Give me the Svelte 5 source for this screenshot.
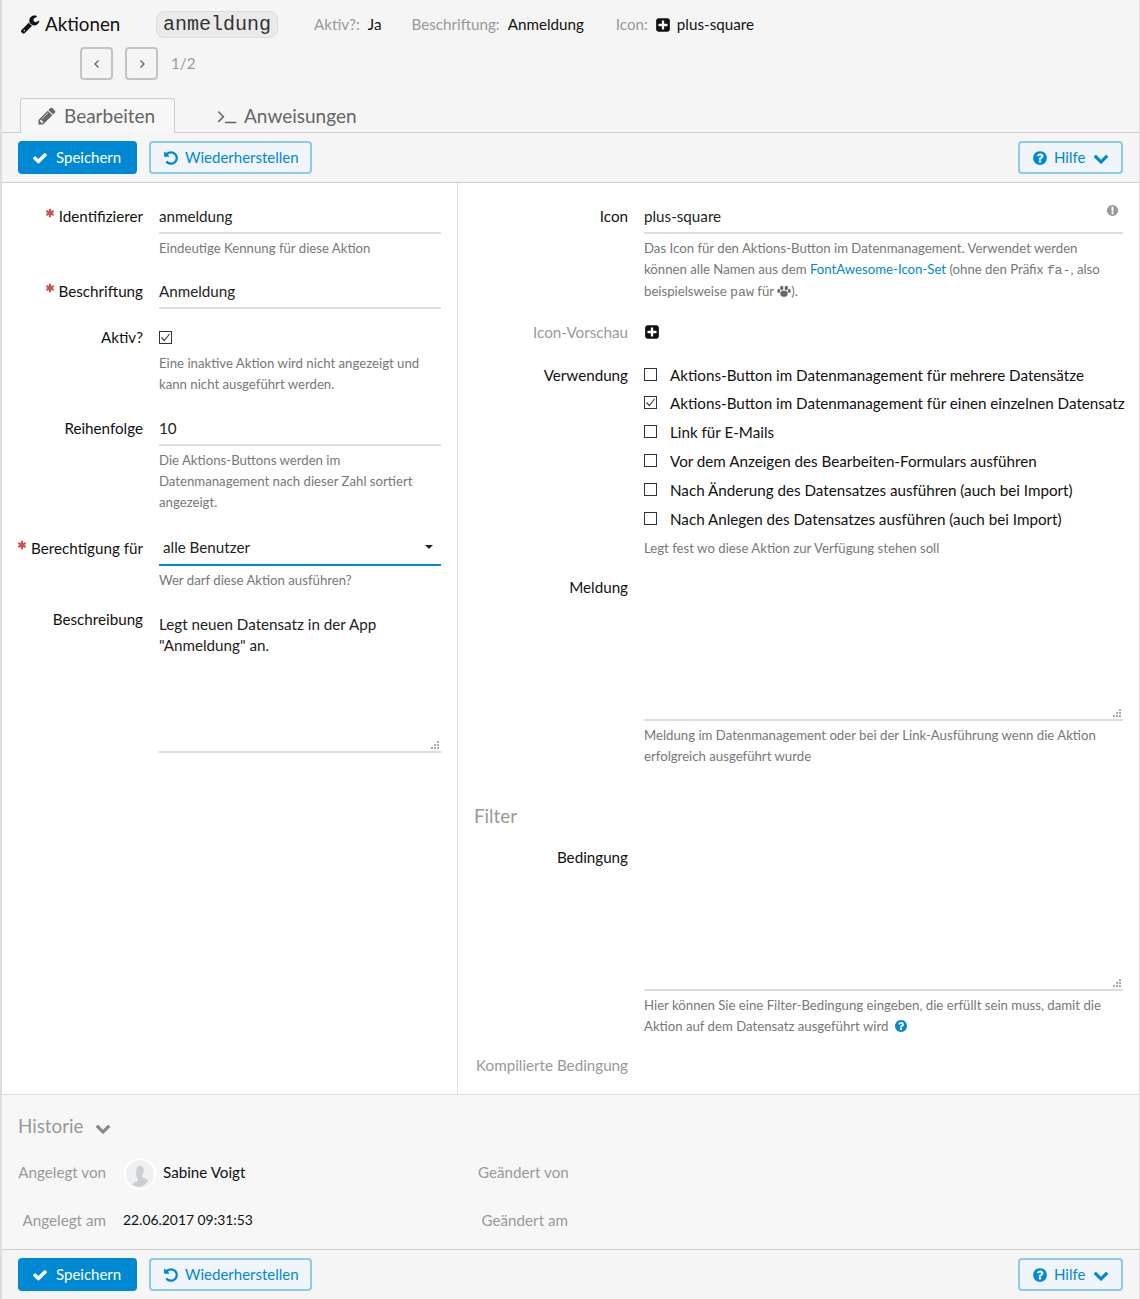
<script>
const P = {
  check: "M1671 566q0 40-28 68l-724 724-136 136q-28 28-68 28t-68-28l-136-136-362-362q-28-28-28-68t28-68l136-136q28-28 68-28t68 28l294 295 656-657q28-28 68-28t68 28l136 136q28 28 28 68z",
  chevron: "M1683 808l-742 741q-19 19-45 19t-45-19l-742-741q-19-19-19-45.5t19-45.5l166-165q19-19 45-19t45 19l531 531 531-531q19-19 45-19t45 19l166 165q19 19 19 45.5t-19 45.5z",
  question: "M1024 1376v-192q0-14-9-23t-23-9h-192q-14 0-23 9t-9 23v192q0 14 9 23t23 9h192q14 0 23-9t9-23zm256-672q0-88-55.5-163t-138.5-116-170-41q-243 0-371 213-15 24 8 42l132 100q7 6 19 6 16 0 25-12 53-68 86-92 34-24 86-24 48 0 85.5 26t37.5 59q0 38-20 61t-68 45q-63 28-115.5 86.5t-52.5 125.5v36q0 14 9 23t23 9h192q14 0 23-9t9-23q0-19 21.5-49.5t54.5-49.5q32-18 49-28.5t46-35 44.5-48 28-60.5 12.5-81zm384 192q0 209-103 385.5t-279.5 279.5-385.5 103-385.5-103-279.5-279.5-103-385.5 103-385.5 279.5-279.5 385.5-103 385.5 103 279.5 279.5 103 385.5z",
  undo: "M1664 896q0 156-61 298t-164 245-245 164-298 61q-172 0-327-72.5t-264-204.5q-7-10-6.5-22.5t8.5-20.5l137-138q10-9 25-9 16 2 23 12 73 95 179 147t225 52q104 0 198.5-40.5t163.5-109.5 109.5-163.5 40.5-198.5-40.5-198.5-109.5-163.5-163.5-109.5-198.5-40.5q-98 0-188 35.5t-160 101.5l137 138q31 30 14 69-17 40-59 40h-448q-26 0-45-19t-19-45v-448q0-42 40-59 39-17 69 14l130 129q107-101 244.5-156.5t284.5-55.5q156 0 298 61t245 164 164 245 61 298z",
  plus: "M1408 960v-128q0-26-19-45t-45-19h-320v-320q0-26-19-45t-45-19h-128q-26 0-45 19t-19 45v320h-320q-26 0-45 19t-19 45v128q0 26 19 45t45 19h320v320q0 26 19 45t45 19h128q26 0 45-19t19-45v-320h320q26 0 45-19t19-45zm256-544v960q0 119-84.5 203.5t-203.5 84.5h-960q-119 0-203.5-84.5t-84.5-203.5v-960q0-119 84.5-203.5t203.500-84.500h960q119 0 203.500 84.500t84.500 203.500z",
  exclaim: "M896 128q209 0 385.5 103t279.5 279.5 103 385.5-103 385.5-279.5 279.5-385.5 103-385.5-103-279.5-279.5-103-385.5 103-385.5 279.5-279.5 385.5-103zm128 1247v-190q0-14-9-23.5t-22-9.5h-192q-13 0-23 10t-10 23v190q0 13 10 23t23 10h192q13 0 22-9.5t9-23.5zm-2-344l18-621q0-12-10-18-10-8-24-8h-220q-14 0-24 8-10 6-10 18l17 621q0 10 10 17.5t24 7.5h185q14 0 23.5-7.5t10.5-17.5z",
  pencil: "M491 1536l91-91-235-235-91 91v107h128v128h107zm523-928q0-22-22-22-10 0-17 7l-542 542q-7 7-7 17 0 22 22 22 10 0 17-7l542-542q7-7 7-17zm-54-192l416 416-832 832h-416v-416zm683 96q0 53-37 90l-166 166-416-416 166-165q36-38 90-38 53 0 91 38l235 234q37 39 37 91z",
  wrench: "M448 1472q0-26-19-45t-45-19-45 19-19 45 19 45 45 19 45-19 19-45zm644-420l-682 682q-37 37-90 37-52 0-91-37l-106-108q-38-36-38-90 0-53 38-91l681-681q39 98 114.5 173.5t173.5 114.5zm634-435q0 39-23 106-47 134-164.5 217.5t-258.5 83.5q-185 0-316.5-131.5t-131.5-316.5 131.5-316.5 316.5-131.5q58 0 121.5 16.5t107.5 46.5q16 11 16 28t-16 28l-293 169v224l193 107q5-3 79-48.5t135.5-81 70.5-35.5q15 0 23.5 10t8.5 25z",
  terminal: "M649 983l-466 466q-10 10-23 10t-23-10l-50-50q-10-10-10-23t10-23l393-393-393-393q-10-10-10-23t10-23l50-50q10-10 23-10t23 10l466 466q10 10 10 23t-10 23zm1079 457v64q0 14-9 23t-23 9h-960q-14 0-23-9t-9-23v-64q0-14 9-23t23-9h960q14 0 23 9t9 23z",
  asterisk: "M1546 1050q46 26 59.5 77.5t-12.5 97.5l-64 110q-26 46-77.5 59.5t-97.5-12.5l-266-153v307q0 52-38 90t-90 38h-128q-52 0-90-38t-38-90v-307l-266 153q-46 26-97.5 12.5t-77.5-59.5l-64-110q-26-46-12.5-97.5t59.5-77.5l266-154-266-154q-46-26-59.5-77.5t12.5-97.5l64-110q26-46 77.5-59.5t97.5 12.5l266 153v-307q0-52 38-90t90-38h128q52 0 90 38t38 90v307l266-153q46-26 97.5-12.5t77.5 59.5l64 110q26 46 12.5 97.5t-59.5 77.5l-266 154z"
};
const usages = [
  ["Aktions-Button im Datenmanagement für mehrere Datensätze", false],
  ["Aktions-Button im Datenmanagement für einen einzelnen Datensatz", true],
  ["Link für E-Mails", false],
  ["Vor dem Anzeigen des Bearbeiten-Formulars ausführen", false],
  ["Nach Änderung des Datensatzes ausführen (auch bei Import)", false],
  ["Nach Anlegen des Datensatzes ausführen (auch bei Import)", false]
];
</script>

{#snippet icon(name, cls)}
  <svg class={"ic " + cls} viewBox="0 0 1792 1792" aria-hidden="true"><path d={P[name]} /></svg>
{/snippet}

{#snippet box(on)}
  <span class="box">
    {#if on}<svg viewBox="0 0 13 13"><path d="M2.5 6.5 5.3 9.5 10.5 3" fill="none" stroke="#444" stroke-width="1.2" /></svg>{/if}
  </span>
{/snippet}

{#snippet grip()}
  <svg class="grip" viewBox="0 0 9 9"><g fill="#aaa"><rect x="7" y="1" width="2" height="2" /><rect x="4" y="4" width="2" height="2" /><rect x="7" y="4" width="2" height="2" /><rect x="1" y="7" width="2" height="2" /><rect x="4" y="7" width="2" height="2" /><rect x="7" y="7" width="2" height="2" /></g></svg>
{/snippet}

{#snippet toolbar()}
  <div class="toolbar">
    <button class="btn primary">{@render icon("check", "i16")}<span>Speichern</span></button>
    <button class="btn outline restore">{@render icon("undo", "i16")}<span>Wiederherstellen</span></button>
    <button class="btn outline help">{@render icon("question", "i16")}<span>Hilfe</span>{@render icon("chevron", "i16 helpchev")}</button>
  </div>
{/snippet}

<div class="page">
  <header class="top">
    <div class="meta">
      <h1 class="title">{@render icon("wrench", "wrench")}Aktionen</h1>
      <code class="pill">anmeldung</code>
      <span class="m k first">Aktiv?:</span><span class="m v">Ja</span>
      <span class="m k second">Beschriftung:</span><span class="m v">Anmeldung</span>
      <span class="m k third">Icon:</span>{@render icon("plus", "plusicon")}<span class="m v">plus-square</span>
    </div>
    <div class="pager">
      <button class="nav"><svg viewBox="0 0 10 10"><path d="M6.5 1.5 3 5l3.500 3.500" /></svg></button>
      <button class="nav"><svg viewBox="0 0 10 10"><path d="M3.5 1.5 7 5 3.5 8.5" /></svg></button>
      <span class="count">1/2</span>
    </div>
    <nav class="tabs">
      <a class="tab active">{@render icon("pencil", "tabic")}Bearbeiten</a>
      <a class="tab">{@render icon("terminal", "tabic")}Anweisungen</a>
    </nav>
  </header>

  {@render toolbar()}

  <main class="form">
    <section class="col left">
      <div class="row">
        <label class="lab">{@render icon("asterisk", "star")}Identifizierer</label>
        <div class="ctl"><input class="inp" value="anmeldung" /><p class="hint">Eindeutige Kennung für diese Aktion</p></div>
      </div>
      <div class="row">
        <label class="lab">{@render icon("asterisk", "star")}Beschriftung</label>
        <div class="ctl"><input class="inp" value="Anmeldung" /></div>
      </div>
      <div class="row aktiv">
        <label class="lab short">Aktiv?</label>
        <div class="ctl"><div class="single">{@render box(true)}</div><p class="hint after">Eine inaktive Aktion wird nicht angezeigt und kann nicht ausgeführt werden.</p></div>
      </div>
      <div class="row">
        <label class="lab">Reihenfolge</label>
        <div class="ctl"><input class="inp" value="10" /><p class="hint">Die Aktions-Buttons werden im Datenmanagement nach dieser Zahl sortiert angezeigt.</p></div>
      </div>
      <div class="row sel">
        <label class="lab">{@render icon("asterisk", "star")}Berechtigung für</label>
        <div class="ctl">
          <div class="select"><span>alle Benutzer</span><i class="caret"></i></div>
          <p class="hint">Wer darf diese Aktion ausführen?</p>
        </div>
      </div>
      <div class="row">
        <label class="lab short">Beschreibung</label>
        <div class="ctl"><div class="area desc">Legt neuen Datensatz in der App "Anmeldung" an.{@render grip()}</div></div>
      </div>
    </section>

    <section class="col right">
      <div class="row">
        <label class="lab">Icon</label>
        <div class="ctl wide-ctl">
          <input class="inp" value="plus-square" />
          {@render icon("exclaim", "warn")}
          <p class="hint">Das Icon für den Aktions-Button im Datenmanagement. Verwendet werden können alle Namen aus dem <a class="link">FontAwesome-Icon-Set</a> (ohne den Präfix <code>fa-</code>, also beispielsweise <code class="tall">paw</code> für <svg class="paw" viewBox="0 0 16 16"><ellipse cx="8" cy="11" rx="4.2" ry="3.6" /><ellipse cx="5.4" cy="4.6" rx="1.9" ry="2.6" /><ellipse cx="10.6" cy="4.6" rx="1.9" ry="2.6" /><ellipse cx="2" cy="8" rx="1.7" ry="2.3" /><ellipse cx="14" cy="8" rx="1.7" ry="2.3" /></svg>).</p>
        </div>
      </div>
      <div class="row preview">
        <label class="lab short muted">Icon-Vorschau</label>
        <div class="ctl single">{@render icon("plus", "plusicon")}</div>
      </div>
      <div class="row use">
        <label class="lab short">Verwendung</label>
        <div class="ctl">
          <ul class="checks">
            {#each usages as [text, on]}
              <li>{@render box(on)}<span>{text}</span></li>
            {/each}
          </ul>
          <p class="hint legt">Legt fest wo diese Aktion zur Verfügung stehen soll</p>
        </div>
      </div>
      <div class="row">
        <label class="lab short">Meldung</label>
        <div class="ctl"><div class="area msg">{@render grip()}</div><p class="hint">Meldung im Datenmanagement oder bei der Link-Ausführung wenn die Aktion erfolgreich ausgeführt wurde</p></div>
      </div>
      <h2 class="filter">Filter</h2>
      <div class="row">
        <label class="lab short">Bedingung</label>
        <div class="ctl"><div class="area cond">{@render grip()}</div><p class="hint">Hier können Sie eine Filter-Bedingung eingeben, die erfüllt sein muss, damit die Aktion auf dem Datensatz ausgeführt wird {@render icon("question", "qs")}</p></div>
      </div>
      <div class="row compiled">
        <label class="lab short muted">Kompilierte Bedingung</label>
      </div>
    </section>
  </main>

  <section class="history">
    <h2 class="hist-title">Historie {@render icon("chevron", "histchev")}</h2>
    <div class="hist-grid">
      <span class="k1">Angelegt von</span>
      <div class="user">
        <svg class="avatar" viewBox="0 0 32 32"><circle cx="16" cy="16" r="15" fill="#eef0f1" stroke="#fff" stroke-width="2" /><path d="M16 9c2.6 0 3.800 2 3.800 4.600 0 2-.9 3.600-1.800 4.600v1.600l5 2.600c.5.3.9.7 1.100 1.200A13.600 13.600 0 0 1 16 30c-3 0-5.800-1-8.100-2.400.2-.5.6-.9 1.100-1.200l5-2.600v-1.600c-.9-1-1.800-2.600-1.800-4.600C12.200 11 13.400 9 16 9z" transform="translate(0 -1)" fill="#cbced0" /></svg>
        <span>Sabine Voigt</span>
      </div>
      <span class="k2">Geändert von</span>
      <span class="k1">Angelegt am</span>
      <span class="date">22.06.2017 09:31:53</span>
      <span class="k2">Geändert am</span>
    </div>
  </section>

  {@render toolbar()}
</div>

<style>
:global(body) { margin: 0; background: #fff; }
.page {
  width: 1140px; height: 1299px; box-sizing: border-box; overflow: hidden;
  border-left: 2px solid #ddd; border-right: 1px solid #ddd;
  font: 15.2px/24px Lato, "Noto Sans", sans-serif; color: #111;
  display: flex; flex-direction: column; background: #fff;
}
.ic { fill: currentColor; display: inline-block; flex: none; }
.top { height: 133px; box-sizing: border-box; background: #f5f5f5; border-bottom: 1px solid #ccc; position: relative; }
.meta { display: flex; align-items: center; height: 27px; padding: 11px 0 0 18px; }
.title { margin: 0; font: 400 18.8px/25px Lato, sans-serif; display: flex; align-items: center; color: #111; width: 136px; padding-bottom: 2px; }
.wrench { width: 20px; height: 20px; margin-right: 5px; }
.pill { font: 20px/25px "Liberation Mono", monospace; box-sizing: border-box; width: 122px; height: 27px; border: 1px solid #ddd; border-radius: 8px; background: #eaeaea; text-align: center; color: #333; }
.m { white-space: nowrap; position: relative; top: -1px; }
.k { color: #999; margin-right: 8px; }
.first { margin-left: 36px; }
.second { margin-left: 30px; }
.third { margin-left: 32px; }
.plusicon { width: 16px; height: 16px; color: #111; }
.meta .plusicon { margin-right: 6px; margin-left: -1px; }
.pager { display: flex; align-items: center; padding: 9px 0 0 78px; height: 33px; }
.nav { width: 33px; height: 33px; padding: 0; box-sizing: border-box; border: 2px solid #c4c4c4; border-radius: 4px; background: #f5f5f5; margin-right: 12px; display: flex; align-items: center; justify-content: center; }
.nav svg { width: 10px; height: 10px; fill: none; stroke: #666; stroke-width: 1.4; }
.count { color: #999; line-height: 33px; margin-left: 1px; }
.tabs { position: absolute; left: 18px; bottom: -1px; display: flex; height: 35px; }
.tab { box-sizing: border-box; display: flex; align-items: center; font-size: 19px; color: #666; border: 1px solid transparent; border-bottom: 0; height: 35px; padding: 0 16px 1px; white-space: nowrap; }
.tab.active { width: 155px; background: #f7f7f7; border-color: #ccc; border-radius: 3px 3px 0 0; }
.tab + .tab { padding-left: 41px; }
.tabic { width: 20px; height: 20px; margin-right: 7px; color: #666; }
.toolbar { height: 50px; box-sizing: border-box; padding: 8px 16px 0 16px; background: #f5f5f5; border-bottom: 1px solid #ccc; display: flex; gap: 12px; }
.toolbar:last-child { border-bottom: 0; border-top: 1px solid #ccc; padding-top: 8px; height: 50px; }
.btn { box-sizing: border-box; height: 33px; border-radius: 4px; display: flex; align-items: center; gap: 8px; font: 15px/1 Lato, sans-serif; padding: 0 12px; white-space: nowrap; }
.primary { width: 119px; background: #0089d3; border: 0; padding: 0 14px; color: #fff; }
.outline { background: #f0f5f9; border: 2px solid #8ccae8; color: #0089d3; gap: 6px; }
.restore { width: 163px; }
.help { width: 105px; margin-left: auto; }
.helpchev { margin-left: 2px; }
.i16 { width: 16px; height: 16px; }
.form { flex: 1; display: grid; grid-template-columns: 456px 1fr; min-height: 0; }
.col { padding-top: 17px; box-sizing: border-box; }
.left { border-right: 1px solid #ddd; }
.row { display: grid; column-gap: 16px; margin-bottom: 16px; }
.left .row { grid-template-columns: 141px 282px; }
.right .row { grid-template-columns: 170px 479px; }
.lab { display: block; text-align: right; line-height: 32px; white-space: nowrap; color: #111; }
.lab.short { line-height: 24px; }
.star { width: 10px; height: 10px; color: #c9504c; vertical-align: 4px; margin-right: 4px; }
.muted { color: #999 !important; }
.ctl { min-width: 0; position: relative; }
.inp { display: block; width: 100%; box-sizing: border-box; height: 34px; border: 0; border-bottom: 2px solid #ddd; background: none; font: inherit; color: #222; padding: 0 0 1px; outline: 0; }
.hint { margin: 4px 0 0; font-size: 13.2px; line-height: 21px; color: #777; }
.hint.after { margin-top: 4px; }
.hint code { font: 13.3px "Liberation Mono", monospace; }
.hint code.tall { line-height: 25px; }
.single { height: 24px; display: flex; align-items: center; }
.aktiv { margin-bottom: 17px; }
.box { box-sizing: border-box; display: block; flex: none; width: 13px; height: 13px; border: 1px solid #333; background: #fff; position: relative; }
.box svg { position: absolute; left: -1px; top: -1px; width: 13px; height: 13px; }
.select { box-sizing: border-box; height: 34px; border-bottom: 2px solid #0089d3; padding: 0 4px 2px; display: flex; align-items: center; justify-content: space-between; line-height: 30px; color: #222; }
.sel { margin-top: 19px; }
.caret { border: 4px solid transparent; border-top-color: #222; border-bottom: 0; margin-right: 4px; }
.area { box-sizing: border-box; position: relative; border-bottom: 2px solid #ddd; line-height: 21px; color: #222; }
.desc { height: 146px; padding-top: 7px; }
.msg { height: 146px; }
.cond { height: 146px; }
.grip { position: absolute; right: 2px; bottom: 2px; width: 9px; height: 9px; }
.warn { position: absolute; right: 4px; top: 4px; width: 13px; height: 13px; color: #999; }
.link { color: #0089d3; }
.paw { width: 14px; height: 14px; fill: #666; vertical-align: -2px; }
.qs { width: 14px; height: 14px; color: #0089d3; vertical-align: -2px; margin-left: 2px; }
.preview { margin-top: -1px; margin-bottom: 19px; }
.checks { list-style: none; margin: 0; padding: 0; }
.checks li { display: flex; align-items: center; gap: 13px; height: 29px; white-space: nowrap; }
.checks li:first-child { margin-top: -3px; }
.checks li:nth-child(2) { margin-top: -1px; }
.legt { margin-top: 5px; }
.use { margin-bottom: 16px; }
.filter { margin: 35px 0 15px 16px; font: 400 18.8px/28px Lato, sans-serif; color: #999; }
.history { height: 155px; box-sizing: border-box; border-top: 1px solid #ddd; background: #f7f7f7; padding: 18px 16px 0; }
.hist-title { margin: 0; font: 400 18.8px/26px Lato, sans-serif; color: #999; }
.histchev { width: 16px; height: 16px; margin-left: 7px; vertical-align: -3px; color: #888; }
.hist-grid { display: grid; grid-template-columns: 88px 340px 90px; column-gap: 16px; grid-auto-rows: 48px; align-items: center; margin-top: 9px; white-space: nowrap; }
.k1, .k2 { color: #999; text-align: right; }
.user { display: flex; align-items: center; gap: 7px; margin-left: 2px; }
.avatar { width: 32px; height: 32px; position: relative; top: 2px; }
.date { margin-left: 1px; font-size: 13.9px; }
</style>
